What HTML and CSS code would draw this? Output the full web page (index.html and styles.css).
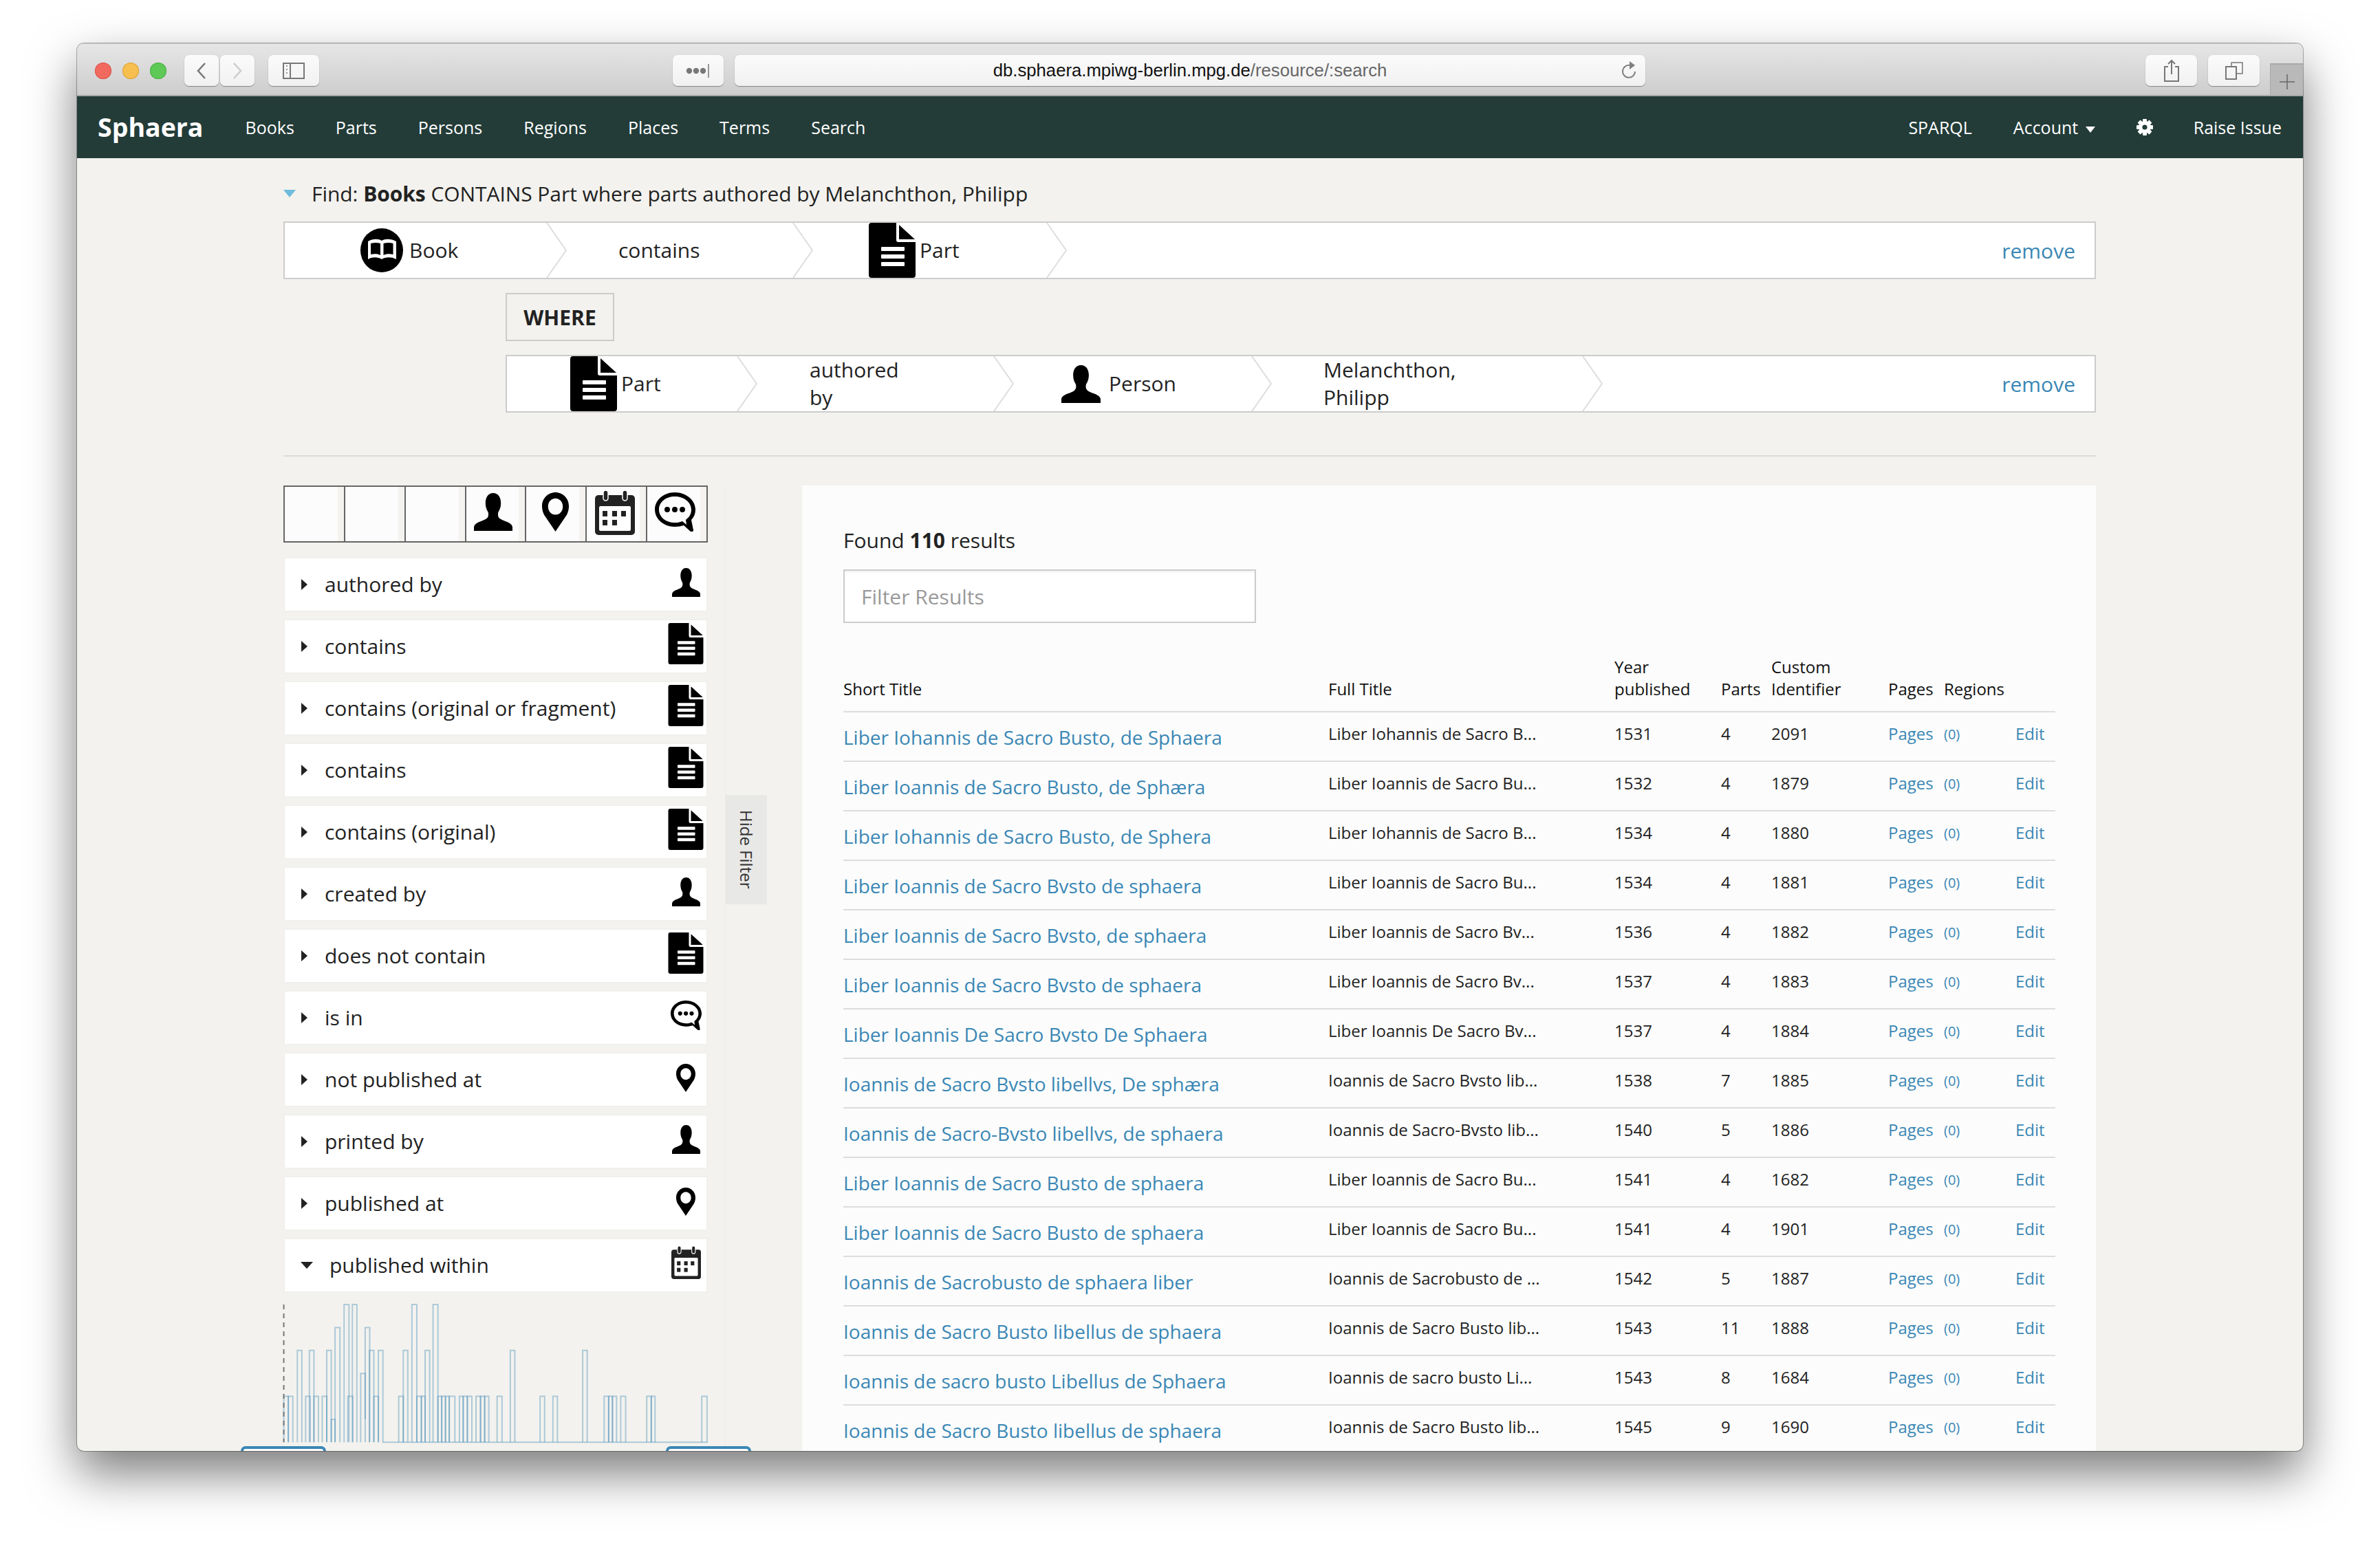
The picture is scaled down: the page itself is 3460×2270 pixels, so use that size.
FILE: index.html
```html
<!DOCTYPE html>
<html lang="en">
<head>
<meta charset="utf-8">
<title>Sphaera</title>
<link rel="stylesheet" href="styles.css">
</head>
<body>
<svg class="defs" width="0" height="0" aria-hidden="true">
  <symbol id="i-doc" viewBox="0 0 68 80">
    <path d="M4 0H40V25a3 3 0 0 0 3 3H68V76a4 4 0 0 1-4 4H4a4 4 0 0 1-4-4V4a4 4 0 0 1 4-4Z"/>
    <path d="M44 3L67 24H44Z"/>
    <rect x="18" y="35" width="34" height="6" rx="1" fill="#fff"/>
    <rect x="18" y="46" width="34" height="6" rx="1" fill="#fff"/>
    <rect x="18" y="57" width="34" height="6" rx="1" fill="#fff"/>
  </symbol>
  <symbol id="i-person" viewBox="0 0 60 60" preserveAspectRatio="none">
    <path d="M30 0c-8 0-12 7-12 16 0 6 2 11 4 14 1 4 1 8-3 11-5 4-18 5-19 13v6h60v-6c-1-8-14-9-19-13-4-3-4-7-3-11 2-3 4-8 4-14C42 7 38 0 30 0Z"/>
  </symbol>
  <symbol id="i-pin" viewBox="0 0 40 58" preserveAspectRatio="none">
    <path fill-rule="evenodd" d="M20 0C9 0 0 9 0 20c0 5 1 9 3 13l17 25 17-25c2-4 3-8 3-13C40 9 31 0 20 0Zm0 9c6 0 11 5 11 12s-5 12-11 12S9 28 9 21 14 9 20 9Z"/>
  </symbol>
  <symbol id="i-cal" viewBox="0 0 58 65" preserveAspectRatio="none">
    <path fill="#222" d="M5 7H53a5 5 0 0 1 5 5V60a5 5 0 0 1-5 5H5a5 5 0 0 1-5-5V12a5 5 0 0 1 5-5Z"/>
    <rect x="6" y="23" width="46" height="36" rx="2" fill="#fff"/>
    <rect x="12" y="0" width="7" height="15" rx="3.5" fill="#222" stroke="#fff" stroke-width="1.5"/>
    <rect x="40" y="0" width="7" height="15" rx="3.5" fill="#222" stroke="#fff" stroke-width="1.5"/>
    <g fill="#222">
      <rect x="11" y="30" width="7" height="8"/><rect x="25" y="30" width="7" height="8"/><rect x="38" y="30" width="7" height="8"/>
      <rect x="11" y="43" width="7" height="8"/><rect x="25" y="43" width="7" height="8"/>
    </g>
  </symbol>
  <symbol id="i-bubble" viewBox="0 0 59 57" preserveAspectRatio="none">
    <path fill-rule="evenodd" d="M29 0C13 0 0 11 0 25s13 25 29 25c5 0 9-1 13-2l10 9c2 1 4 0 4-2l-3-15c4-4 6-9 6-15C59 11 45 0 29 0Zm0 6c13 0 24 8 24 19 0 5-2 10-6 13l-2 2 1 7-6-5-3 1c-3 1-5 1-8 1C16 44 6 36 6 25S16 6 29 6Z"/>
    <circle cx="18" cy="25" r="4"/><circle cx="29" cy="25" r="4"/><circle cx="40" cy="25" r="4"/>
  </symbol>
  <symbol id="i-book" viewBox="0 0 62 64" preserveAspectRatio="none">
    <ellipse cx="31" cy="32" rx="31" ry="32"/>
    <path fill="#fff" d="M11 19c7-4 15-4 20-1 5-3 13-3 21 1v26c-8-4-16-3-21 0-5-3-13-4-20 0Z"/>
    <path fill="#000" d="M15 22c5-1.500 10-1.500 14 0v17c-4-2-9-2-14-1ZM33.500 22c5-1.500 10-1.500 14 0v16c-5-1-10-1-14 1Z"/>
  </symbol>
  <symbol id="i-chev" viewBox="0 0 30 84" preserveAspectRatio="none">
    <path d="M1 0L29 42L1 84" fill="none" stroke="#ddd" stroke-width="2"/>
  </symbol>
</svg>

<div class="window">
  <header class="chrome">
    <div class="lights"><span class="light red"></span><span class="light amber"></span><span class="light green"></span></div>
    <div class="navpair">
      <span class="btn b-nav"><svg width="18" height="26" viewBox="0 0 18 26"><path d="M14 2L4 13l10 11" fill="none" stroke="#777" stroke-width="2.5"/></svg></span>
      <span class="btn b-nav"><svg width="18" height="26" viewBox="0 0 18 26"><path d="M4 2l10 11L4 24" fill="none" stroke="#ccc" stroke-width="2.5"/></svg></span>
    </div>
    <span class="btn b-side"><svg width="32" height="24" viewBox="0 0 32 24"><rect x="1" y="1" width="30" height="22" fill="none" stroke="#777" stroke-width="2"/><path d="M11 1v22" stroke="#777" stroke-width="2"/><path d="M5 5h2M5 10h2M5 15h2" stroke="#999" stroke-width="2"/></svg></span>
    <span class="btn b-dots"><svg width="40" height="24" viewBox="0 0 40 24"><circle cx="7" cy="12" r="4.2" fill="#777"/><circle cx="17" cy="12" r="4.2" fill="#777"/><circle cx="27" cy="12" r="4.2" fill="#777"/><path d="M35 2v20" stroke="#777" stroke-width="1.5"/></svg></span>
    <div class="urlbar">
      <span class="url"><span class="url-host">db.sphaera.mpiwg-berlin.mpg.de</span><span class="url-path">/resource/:search</span></span>
      <svg class="reload" width="24" height="28" viewBox="0 0 24 28"><path d="M14 7a9 9 0 1 0 7 9" fill="none" stroke="#808080" stroke-width="2"/><path d="M13 1l8 6-8 6Z" fill="#808080"/></svg>
    </div>
    <span class="btn b-tool"><svg width="24" height="34" viewBox="0 0 24 34"><path d="M7 11H2v21h20V11h-5" fill="none" stroke="#777" stroke-width="2"/><path d="M12 22V2M7 7l5-5 5 5" fill="none" stroke="#777" stroke-width="2"/></svg></span>
    <span class="btn b-tool b-tabs"><svg width="26" height="26" viewBox="0 0 26 26"><rect x="1" y="7" width="15" height="18" fill="none" stroke="#777" stroke-width="2"/><path d="M9 7V1h16v16h-9" fill="none" stroke="#777" stroke-width="1.5"/></svg></span>
    <span class="newtab"><svg width="24" height="24" viewBox="0 0 24 24"><path d="M12 1v22M1 12h22" stroke="#666" stroke-width="1.5"/></svg></span>
  </header>

  <nav class="navbar">
    <a class="brand">Sphaera</a>
    <a class="nav-a">Books</a><a class="nav-a">Parts</a><a class="nav-a">Persons</a><a class="nav-a">Regions</a><a class="nav-a">Places</a><a class="nav-a">Terms</a><a class="nav-a">Search</a>
    <span class="nav-spacer"></span>
    <a class="nav-a">SPARQL</a>
    <a class="nav-a">Account <span class="caret"></span></a>
    <a class="nav-a nav-gear"><svg width="24" height="24" viewBox="0 0 24 24"><g fill="#fff"><rect x="9" y="0" width="6" height="24" rx="1"/><rect x="9" y="0" width="6" height="24" rx="1" transform="rotate(45 12 12)"/><rect x="9" y="0" width="6" height="24" rx="1" transform="rotate(90 12 12)"/><rect x="9" y="0" width="6" height="24" rx="1" transform="rotate(135 12 12)"/><circle cx="12" cy="12" r="9"/></g><circle cx="12" cy="12" r="3.6" fill="#233c38"/></svg></a>
    <a class="nav-a nav-last">Raise Issue</a>
  </nav>

  <main class="content">
    <div class="find"><span class="find-tri"></span>Find:&nbsp;<b>Books</b>&nbsp;CONTAINS Part where parts authored by Melanchthon, Philipp</div>

    <div class="chain">
      <div class="seg s1"><svg class="ic-book"><use href="#i-book"/></svg><span class="seg-t">Book</span><svg class="chev"><use href="#i-chev"/></svg></div>
      <div class="seg s2"><span class="seg-t">contains</span><svg class="chev"><use href="#i-chev"/></svg></div>
      <div class="seg s3"><svg class="ic-doc"><use href="#i-doc"/></svg><span class="seg-t">Part</span><svg class="chev"><use href="#i-chev"/></svg></div>
      <a class="remove">remove</a>
    </div>

    <div class="where">WHERE</div>

    <div class="chain chain2">
      <div class="seg t1"><svg class="ic-doc"><use href="#i-doc"/></svg><span class="seg-t">Part</span><svg class="chev"><use href="#i-chev"/></svg></div>
      <div class="seg t2"><span class="seg-t seg-wrap">authored<br>by</span><svg class="chev"><use href="#i-chev"/></svg></div>
      <div class="seg t3"><svg class="ic-person"><use href="#i-person"/></svg><span class="seg-t">Person</span><svg class="chev"><use href="#i-chev"/></svg></div>
      <div class="seg t4"><span class="seg-t seg-wrap">Melanchthon,<br>Philipp</span><svg class="chev"><use href="#i-chev"/></svg></div>
      <a class="remove">remove</a>
    </div>

    <hr class="rule">

    <div class="columns">
      <aside class="sidebar">
        <div class="iconbar">
          <span class="cell"></span><span class="cell"></span><span class="cell"></span>
          <span class="cell"><svg class="bar-person"><use href="#i-person"/></svg></span>
          <span class="cell"><svg class="bar-pin"><use href="#i-pin"/></svg></span>
          <span class="cell"><svg class="bar-cal"><use href="#i-cal"/></svg></span>
          <span class="cell"><svg class="bar-bubble"><use href="#i-bubble"/></svg></span>
        </div>

        <div class="row"><span class="tri"></span><span class="row-t">authored by</span><span class="slot"><svg class="s-person"><use href="#i-person"/></svg></span></div>
        <div class="row"><span class="tri"></span><span class="row-t">contains</span><span class="slot"><svg class="s-doc"><use href="#i-doc"/></svg></span></div>
        <div class="row"><span class="tri"></span><span class="row-t">contains (original or fragment)</span><span class="slot"><svg class="s-doc"><use href="#i-doc"/></svg></span></div>
        <div class="row"><span class="tri"></span><span class="row-t">contains</span><span class="slot"><svg class="s-doc"><use href="#i-doc"/></svg></span></div>
        <div class="row"><span class="tri"></span><span class="row-t">contains (original)</span><span class="slot"><svg class="s-doc"><use href="#i-doc"/></svg></span></div>
        <div class="row"><span class="tri"></span><span class="row-t">created by</span><span class="slot"><svg class="s-person"><use href="#i-person"/></svg></span></div>
        <div class="row"><span class="tri"></span><span class="row-t">does not contain</span><span class="slot"><svg class="s-doc"><use href="#i-doc"/></svg></span></div>
        <div class="row"><span class="tri"></span><span class="row-t">is in</span><span class="slot"><svg class="s-bubble"><use href="#i-bubble"/></svg></span></div>
        <div class="row"><span class="tri"></span><span class="row-t">not published at</span><span class="slot"><svg class="s-pin"><use href="#i-pin"/></svg></span></div>
        <div class="row"><span class="tri"></span><span class="row-t">printed by</span><span class="slot"><svg class="s-person"><use href="#i-person"/></svg></span></div>
        <div class="row"><span class="tri"></span><span class="row-t">published at</span><span class="slot"><svg class="s-pin"><use href="#i-pin"/></svg></span></div>
        <div class="row"><span class="tri-down"></span><span class="row-t">published within</span><span class="slot"><svg class="s-cal"><use href="#i-cal"/></svg></span></div>

        <div class="histo">
          <svg class="histo-svg" viewBox="167 412 1126 602" preserveAspectRatio="none">
            <path class="hb" d="M430 1012H1292"/>
            <g class="bars">
              <path d="M168 1012V812H180V1012"/><path d="M180 1012V812H192V1012"/><path d="M204 1012V612H216V1012"/><path d="M226 1012V812H238V1012"/><path d="M236 1012V612H248V1012"/><path d="M248 1012V812H260V1012"/><path d="M270 1012V812H282V1012"/><path d="M282 1012V612H294V1012"/><path d="M294 1012V912H304V1012"/><path d="M304 1012V512H317V1012"/><path d="M328 1012V412H341V1012"/><path d="M338 1012V812H351V1012"/><path d="M350 1012V412H362V1012"/><path d="M372 1012V712H384V1012"/><path d="M384 912V512H396V1012"/><path d="M395 1012V612H407V1012"/><path d="M407 1012V812H419V1012"/><path d="M419 1012V612H431V1012"/><path d="M473 1012V812H485V1012"/><path d="M485 1012V612H497V1012"/><path d="M508 1012V412H521V1012"/><path d="M521 1012V812H533V1012"/><path d="M533 1012V812H543V1012"/><path d="M543 1012V612H555V1012"/><path d="M564 1012V412H577V1012"/><path d="M577 1012V812H587V1012"/><path d="M587 1012V812H597V1012"/><path d="M597 1012V812H607V1012"/><path d="M607 1012V812H622V1012"/><path d="M634 1012V812H644V1012"/><path d="M644 1012V812H655V1012"/><path d="M655 1012V812H667V1012"/><path d="M678 1012V812H690V1012"/><path d="M690 1012V812H701V1012"/><path d="M701 1012V812H712V1012"/><path d="M734 1012V812H747V1012"/><path d="M769 1012V612H781V1012"/><path d="M848 1012V812H860V1012"/><path d="M882 1012V812H894V1012"/><path d="M961 1012V612H973V1012"/><path d="M1018 1012V812H1030V1012"/><path d="M1030 1012V812H1040V1012"/><path d="M1040 1012V812H1051V1012"/><path d="M1062 1012V812H1075V1012"/><path d="M1131 1012V812H1143V1012"/><path d="M1143 1012V812H1153V1012"/><path d="M1277 1012V812H1291V1012"/>
            </g>
            <path class="hdash" d="M168 412V1012"/>
          </svg>
          <span class="handle handle-l"></span>
          <span class="handle handle-r"></span>
        </div>

        <div class="hide-tab"><span>Hide Filter</span></div>
      </aside>

      <section class="results">
        <p class="found">Found <b>110</b> results</p>
        <div class="filter">Filter Results</div>
        <table class="tbl">
          <colgroup><col class="c1"><col class="c2"><col class="c3"><col class="c4"><col class="c5"><col class="c6"><col class="c7"><col class="c8"></colgroup>
          <thead>
            <tr><th>Short Title</th><th>Full Title</th><th>Year<br>published</th><th>Parts</th><th>Custom<br>Identifier</th><th>Pages</th><th>Regions</th><th></th></tr>
          </thead>
          <tbody>
            <tr><td><a class="big">Liber Iohannis de Sacro Busto, de Sphaera</a></td><td>Liber Iohannis de Sacro B...</td><td>1531</td><td>4</td><td>2091</td><td><a>Pages</a></td><td><a class="cnt">(0)</a></td><td><a>Edit</a></td></tr>
            <tr><td><a class="big">Liber Ioannis de Sacro Busto, de Sphæra</a></td><td>Liber Ioannis de Sacro Bu...</td><td>1532</td><td>4</td><td>1879</td><td><a>Pages</a></td><td><a class="cnt">(0)</a></td><td><a>Edit</a></td></tr>
            <tr><td><a class="big">Liber Iohannis de Sacro Busto, de Sphera</a></td><td>Liber Iohannis de Sacro B...</td><td>1534</td><td>4</td><td>1880</td><td><a>Pages</a></td><td><a class="cnt">(0)</a></td><td><a>Edit</a></td></tr>
            <tr><td><a class="big">Liber Ioannis de Sacro Bvsto de sphaera</a></td><td>Liber Ioannis de Sacro Bu...</td><td>1534</td><td>4</td><td>1881</td><td><a>Pages</a></td><td><a class="cnt">(0)</a></td><td><a>Edit</a></td></tr>
            <tr><td><a class="big">Liber Ioannis de Sacro Bvsto, de sphaera</a></td><td>Liber Ioannis de Sacro Bv...</td><td>1536</td><td>4</td><td>1882</td><td><a>Pages</a></td><td><a class="cnt">(0)</a></td><td><a>Edit</a></td></tr>
            <tr><td><a class="big">Liber Ioannis de Sacro Bvsto de sphaera</a></td><td>Liber Ioannis de Sacro Bv...</td><td>1537</td><td>4</td><td>1883</td><td><a>Pages</a></td><td><a class="cnt">(0)</a></td><td><a>Edit</a></td></tr>
            <tr><td><a class="big">Liber Ioannis De Sacro Bvsto De Sphaera</a></td><td>Liber Ioannis De Sacro Bv...</td><td>1537</td><td>4</td><td>1884</td><td><a>Pages</a></td><td><a class="cnt">(0)</a></td><td><a>Edit</a></td></tr>
            <tr><td><a class="big">Ioannis de Sacro Bvsto libellvs, De sphæra</a></td><td>Ioannis de Sacro Bvsto lib...</td><td>1538</td><td>7</td><td>1885</td><td><a>Pages</a></td><td><a class="cnt">(0)</a></td><td><a>Edit</a></td></tr>
            <tr><td><a class="big">Ioannis de Sacro-Bvsto libellvs, de sphaera</a></td><td>Ioannis de Sacro-Bvsto lib...</td><td>1540</td><td>5</td><td>1886</td><td><a>Pages</a></td><td><a class="cnt">(0)</a></td><td><a>Edit</a></td></tr>
            <tr><td><a class="big">Liber Ioannis de Sacro Busto de sphaera</a></td><td>Liber Ioannis de Sacro Bu...</td><td>1541</td><td>4</td><td>1682</td><td><a>Pages</a></td><td><a class="cnt">(0)</a></td><td><a>Edit</a></td></tr>
            <tr><td><a class="big">Liber Ioannis de Sacro Busto de sphaera</a></td><td>Liber Ioannis de Sacro Bu...</td><td>1541</td><td>4</td><td>1901</td><td><a>Pages</a></td><td><a class="cnt">(0)</a></td><td><a>Edit</a></td></tr>
            <tr><td><a class="big">Ioannis de Sacrobusto de sphaera liber</a></td><td>Ioannis de Sacrobusto de ...</td><td>1542</td><td>5</td><td>1887</td><td><a>Pages</a></td><td><a class="cnt">(0)</a></td><td><a>Edit</a></td></tr>
            <tr><td><a class="big">Ioannis de Sacro Busto libellus de sphaera</a></td><td>Ioannis de Sacro Busto lib...</td><td>1543</td><td>11</td><td>1888</td><td><a>Pages</a></td><td><a class="cnt">(0)</a></td><td><a>Edit</a></td></tr>
            <tr><td><a class="big">Ioannis de sacro busto Libellus de Sphaera</a></td><td>Ioannis de sacro busto Li...</td><td>1543</td><td>8</td><td>1684</td><td><a>Pages</a></td><td><a class="cnt">(0)</a></td><td><a>Edit</a></td></tr>
            <tr><td><a class="big">Ioannis de Sacro Busto libellus de sphaera</a></td><td>Ioannis de Sacro Busto lib...</td><td>1545</td><td>9</td><td>1690</td><td><a>Pages</a></td><td><a class="cnt">(0)</a></td><td><a>Edit</a></td></tr>
          </tbody>
        </table>
      </section>
    </div>
  </main>
</div>
</body>
</html>
```
FILE: styles.css
```css
* { box-sizing: border-box; }
html, body { margin: 0; height: 100%; background: #fff; overflow: hidden; }
body { padding: 63px 112px 0; font-family: "Open Sans", sans-serif; color: #222; }
.defs { position: absolute; }

.window {
  width: 3236px; height: 2047px; display: flex; flex-direction: column; overflow: hidden;
  border-radius: 10px; background: #f3f2ee;
  box-shadow: 0 32px 70px rgba(0,0,0,.52), 0 0 0 1px rgba(0,0,0,.3);
}

/* browser chrome */
.chrome {
  height: 77px; flex: none; display: flex; align-items: flex-start; position: relative;
  padding: 16px 0 0 26px;
  background: linear-gradient(#e6e6e6, #cdcdcd);
  border-top: 1px solid #c8c8c8; border-bottom: 2px solid #a8a8a8;
}
.lights { display: flex; gap: 16px; padding-top: 11px; width: 130px; }
.light { width: 24px; height: 24px; border-radius: 50%; }
.red { background: #f26a5f; box-shadow: inset 0 0 0 1px #d8544a; }
.amber { background: #f6bf4f; box-shadow: inset 0 0 0 1px #dba23a; }
.green { background: #5fc957; box-shadow: inset 0 0 0 1px #4aae44; }
.btn {
  height: 45px; display: flex; align-items: center; justify-content: center;
  background: linear-gradient(#fbfbfb, #f1f1f1); border-radius: 7px;
  box-shadow: 0 1px 1px rgba(0,0,0,.35), 0 0 1px rgba(0,0,0,.2);
}
.navpair { display: flex; gap: 2px; }
.b-nav { width: 50px; }
.b-side { width: 74px; margin-left: 20px; }
.b-dots { width: 74px; margin-left: 514px; }
.urlbar {
  width: 1324px; height: 45px; margin-left: 16px; position: relative;
  display: flex; align-items: center; justify-content: center;
  background: linear-gradient(#fbfbfb, #f1f1f1); border-radius: 7px;
  box-shadow: 0 1px 1px rgba(0,0,0,.35), 0 0 1px rgba(0,0,0,.2);
}
.url { font: 25.7px "Liberation Sans", sans-serif; }
.url-host { color: #111; }
.url-path { color: #666; }
.reload { position: absolute; right: 12px; top: 8px; }
.b-tool { width: 75px; margin-left: 727px; }
.b-tabs { margin-left: 16px; }
.newtab {
  position: absolute; right: 0; top: 28px; bottom: 0; width: 48px;
  display: flex; align-items: center; justify-content: center; padding-top: 6px;
  background: #b9b9b9; border-top: 2px solid #a9a9a9; border-left: 1px solid #a9a9a9;
}

/* navbar */
.navbar {
  height: 90px; flex: none; display: flex; align-items: center; background: #233c38; color: #fff;
  padding: 0 31px 0 30px;
}
.brand { font-size: 37.5px; font-weight: 700; margin-right: 61px; line-height: 1; }
.nav-a { font-size: 25px; margin-right: 60px; white-space: nowrap; }
.nav-spacer { flex: 1; }
.nav-last { margin-right: 0; }
.nav-gear { display: flex; margin-right: 59px; }
.caret {
  display: inline-block; width: 0; height: 0; margin-left: 4px; vertical-align: middle;
  border-left: 7px solid transparent; border-right: 7px solid transparent; border-top: 9px solid #fff;
}

/* content */
.content { flex: 1; min-height: 0; padding: 0 301px 0 300px; }
.find { height: 92px; display: flex; align-items: center; font-size: 30px; line-height: 40px; padding-top: 11px; letter-spacing: -.06px; }
.find-tri {
  width: 0; height: 0; margin-right: 23px;
  border-left: 9px solid transparent; border-right: 9px solid transparent; border-top: 11px solid #6ebcdd;
}
.chain {
  height: 84px; display: flex; align-items: center; background: #fff; border: 2px solid #ccc; font-size: 30px;
}
.chain2 { margin-left: 323px; }
.seg { height: 100%; display: flex; align-items: center; position: relative; flex: none; }
.seg-t { line-height: 40px; }
.seg-wrap { line-height: 40px; }
.chev { position: absolute; right: -28px; top: 0; width: 30px; height: 100%; z-index: 1; }
.s1 { width: 382px; padding-left: 110px; }
.s2 { width: 358px; padding-left: 103px; }
.s3 { width: 369px; padding-left: 109px; }
.t1 { width: 336px; padding-left: 92px; }
.t2 { width: 373px; padding-left: 104px; }
.t3 { width: 375px; padding-left: 97px; }
.t4 { width: 481px; padding-left: 103px; }
.remove { margin-left: auto; margin-right: 28px; color: #3a87b5; }
.ic-book { width: 62px; height: 64px; margin-right: 9px; }
.ic-doc { width: 68px; height: 80px; margin-right: 6px; }
.ic-person { width: 57px; height: 55px; margin-right: 12px; }
.where {
  width: 158px; height: 70px; margin: 20px 0 20px 323px; border: 2px solid #ccc;
  display: flex; align-items: center; justify-content: center; font-size: 30px; font-weight: 700;
}
.rule { border: 0; height: 2px; background: #dddcd9; margin: 62px 0 42px; }

.columns { display: flex; align-items: flex-start; }
.sidebar { width: 643px; flex: none; position: relative; border-right: 1px solid #ecebe7; height: 1500px; }
.iconbar { width: 617px; height: 83px; display: flex; border: 2px solid #666; background: #666; gap: 2px; margin-bottom: 21px; }
.cell {
  flex: 1; display: flex; align-items: center; justify-content: center;
  background: linear-gradient(90deg, #fcfcfc 90%, #f4f3f0 90%);
}
.bar-person { width: 56px; height: 55px; margin-right: 8px; margin-bottom: 6px; }
.bar-pin { width: 39px; height: 57px; margin-right: 2px; margin-bottom: 6px; }
.bar-cal { width: 58px; height: 65px; margin-right: 5px; margin-bottom: 4px; }
.bar-bubble { width: 59px; height: 57px; margin-right: 5px; margin-bottom: 6px; }

.row {
  width: 617px; height: 80px; margin-bottom: 10px; display: flex; align-items: center; position: relative;
  background: #fff; border: 2px solid #f0f0ed; font-size: 30px;
}
.tri { width: 0; height: 0; margin: 0 25px 0 24px; border-top: 8px solid transparent; border-bottom: 8px solid transparent; border-left: 9px solid #222; }
.tri-down { width: 0; height: 0; margin: 0 24px 0 23px; border-left: 9px solid transparent; border-right: 9px solid transparent; border-top: 10px solid #222; }
.row-t { flex: 1; line-height: 40px; }
.slot { width: 52px; height: 100%; margin-right: 4px; display: flex; justify-content: center; align-items: flex-start; }
.s-person { width: 41px; height: 42px; margin-top: 14px; }
.s-doc { width: 52px; height: 60px; margin-top: 4px; }
.s-pin { width: 28px; height: 41px; margin-top: 15px; }
.s-cal { width: 43px; height: 48px; margin-top: 10px; }
.s-bubble { width: 45px; height: 43px; margin-top: 13px; }

.histo { width: 617px; height: 200px; position: relative; margin-top: 17px; }
.histo-svg { width: 617px; height: 201px; display: block; overflow: visible; }
.bars path, .hb { fill: none; stroke: rgba(58,135,181,.38); stroke-width: 2px; vector-effect: non-scaling-stroke; }
.hdash { fill: none; stroke: #777; stroke-width: 2px; stroke-dasharray: 7 6; vector-effect: non-scaling-stroke; }
.handle {
  position: absolute; top: 206px; width: 124px; height: 40px; background: #fff;
  border: 4px solid #3a87b5; border-radius: 7px 7px 0 0;
}
.handle-l { left: -62px; }
.handle-r { left: 556px; }
.hide-tab {
  position: absolute; left: 643px; top: 450px; width: 60px; height: 159px; background: #e8e8e7;
  display: flex; align-items: center; justify-content: center;
}
.hide-tab span { writing-mode: vertical-rl; font-size: 24px; color: #333; }

.results { width: 1881px; height: 1500px; margin-left: 111px; padding: 60px 60px 0; background: #fcfcfc; }
.found { margin: 0 0 22px; font-size: 30px; line-height: 40px; }
.filter {
  width: 600px; height: 78px; padding-left: 24px; display: flex; align-items: center;
  background: #fff; border: 2px solid #ccc; box-shadow: inset 0 2px 3px rgba(0,0,0,.06);
  font-size: 30px; color: #999;
}
.tbl { width: 1762px; table-layout: fixed; border-collapse: collapse; margin-top: 48px; font-size: 24px; }
.c1 { width: 705px; } .c2 { width: 416px; } .c3 { width: 155px; } .c4 { width: 73px; }
.c5 { width: 170px; } .c6 { width: 81px; } .c7 { width: 104px; } .c8 { width: 58px; }
.tbl th { padding: 0 0 16px; font-weight: 400; text-align: left; vertical-align: bottom; line-height: 32px; color: #111; white-space: nowrap; }
.tbl thead tr { border-bottom: 2px solid #ddd; }
.tbl tbody tr { height: 72px; border-bottom: 2px solid #ddd; }
.tbl td { padding: 0 0 8px; vertical-align: middle; white-space: nowrap; line-height: 32px; }
.tbl a { color: #3a87b5; }
.tbl td:first-child { padding: 3px 0 0; }
.tbl a.big { font-size: 28px; }
.tbl a.cnt { font-size: 20px; }
```
